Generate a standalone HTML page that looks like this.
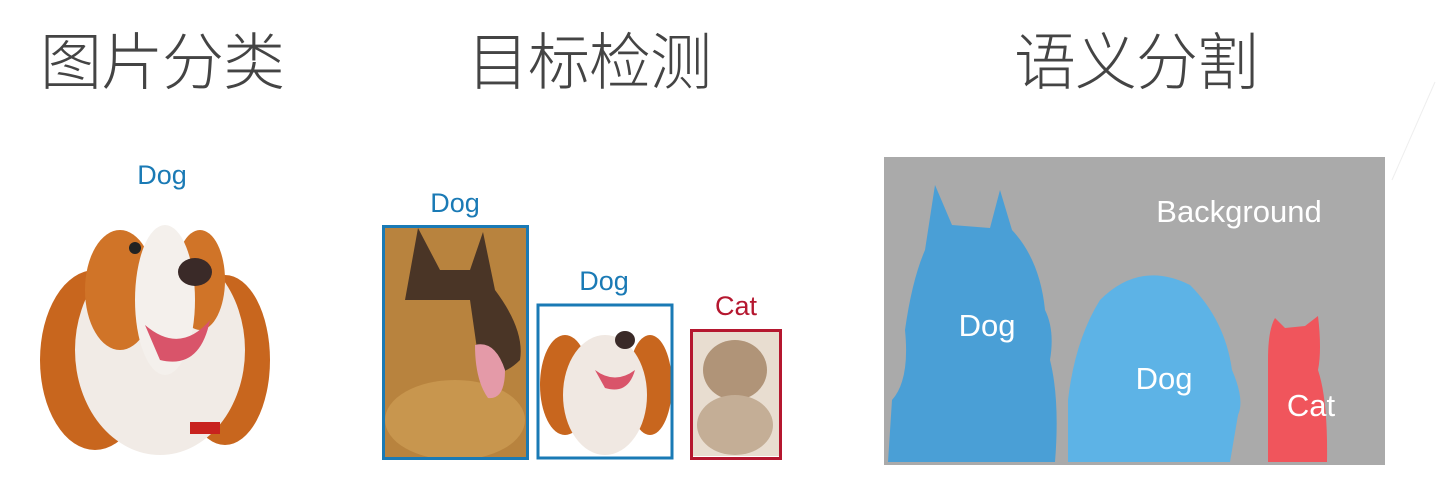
<!DOCTYPE html>
<html><head><meta charset="utf-8"><style>
body{margin:0;width:1442px;height:478px;background:#fff;overflow:hidden;position:relative}
.t{position:absolute;top:17px;font:300 62px "Noto Sans CJK SC",sans-serif;color:#444;letter-spacing:-1px;line-height:80px;white-space:nowrap}
svg{position:absolute;left:0;top:0}
</style></head><body>
<div class="t" style="left:40px">图片分类</div>
<div class="t" style="left:467px">目标检测</div>
<div class="t" style="left:1014px">语义分割</div>
<svg width="1442" height="478" font-family="Liberation Sans, sans-serif">
<g>
<ellipse cx="95" cy="360" rx="55" ry="90" fill="#c8661e"/>
<ellipse cx="225" cy="360" rx="45" ry="85" fill="#c8661e"/>
<ellipse cx="160" cy="350" rx="85" ry="105" fill="#f1ebe6"/>
<ellipse cx="120" cy="290" rx="35" ry="60" fill="#d07428"/>
<ellipse cx="200" cy="280" rx="25" ry="50" fill="#d07428"/>
<ellipse cx="165" cy="300" rx="30" ry="75" fill="#f4f0ec"/>
<ellipse cx="195" cy="272" rx="17" ry="14" fill="#3a2a28"/>
<ellipse cx="135" cy="248" rx="6" ry="6" fill="#222"/>
<path d="M145 325 Q180 355 210 320 Q200 370 160 360Z" fill="#d9546a"/>
<rect x="190" y="422" width="30" height="12" fill="#c8221e"/>
</g>
<text x="162" y="184" font-size="27" fill="#1a7ab5" text-anchor="middle">Dog</text>
<g>
<rect x="384" y="227" width="142" height="230" fill="#b8833e"/>
<path d="M405 300 L418 228 L440 270 L470 270 L483 232 L495 290 Q525 330 520 360 Q500 380 480 370 L470 300 Z" fill="#4a3526"/>
<ellipse cx="455" cy="420" rx="70" ry="40" fill="#c8964e"/>
<path d="M475 345 Q495 340 505 370 Q505 400 488 398 Q475 380 475 345Z" fill="#e49aa8"/>
<rect x="539" y="306" width="131" height="150" fill="#fff"/>
<ellipse cx="565" cy="385" rx="25" ry="50" fill="#c8661e"/>
<ellipse cx="650" cy="385" rx="22" ry="50" fill="#c8661e"/>
<ellipse cx="605" cy="395" rx="42" ry="60" fill="#f0e8e2"/>
<ellipse cx="625" cy="340" rx="10" ry="9" fill="#3a2a28"/>
<path d="M595 370 Q615 385 635 370 Q628 395 605 388Z" fill="#d9546a"/>
<rect x="692" y="332" width="87" height="124" fill="#e8ddd0"/>
<ellipse cx="735" cy="370" rx="32" ry="30" fill="#b09478"/>
<ellipse cx="735" cy="425" rx="38" ry="30" fill="#c4ae96"/>
</g>
<rect x="383.5" y="226.5" width="144" height="232" fill="none" stroke="#1a7ab5" stroke-width="3"/>
<rect x="538" y="305" width="134" height="153" fill="none" stroke="#1a7ab5" stroke-width="3"/>
<rect x="691.5" y="330.5" width="89" height="128" fill="none" stroke="#b5172f" stroke-width="3"/>
<text x="455" y="212" font-size="27" fill="#1a7ab5" text-anchor="middle">Dog</text>
<text x="604" y="290" font-size="27" fill="#1a7ab5" text-anchor="middle">Dog</text>
<text x="736" y="315" font-size="27" fill="#b5172f" text-anchor="middle">Cat</text>
<rect x="884" y="157" width="501" height="308" fill="#aaaaaa"/>
<path d="M888 462 L892 400 Q910 380 905 330 Q912 280 925 250 L935 185 L952 225 L990 228 L1000 190 L1012 230 Q1040 260 1045 310 Q1055 330 1050 360 Q1060 400 1055 462Z" fill="#4a9fd6"/>
<path d="M1068 462 L1068 400 Q1075 340 1100 300 Q1140 260 1190 285 Q1225 320 1232 370 Q1245 400 1238 415 L1230 462Z" fill="#5db3e6"/>
<path d="M1268 462 L1268 360 Q1268 330 1275 318 L1285 328 L1305 326 L1318 316 Q1322 350 1318 370 Q1328 400 1327 462Z" fill="#f0555c"/>
<text x="1239" y="222" font-size="31" fill="#fff" text-anchor="middle">Background</text>
<text x="987" y="336" font-size="31" fill="#fff" text-anchor="middle">Dog</text>
<text x="1164" y="389" font-size="31" fill="#fff" text-anchor="middle">Dog</text>
<text x="1311" y="416" font-size="31" fill="#fff" text-anchor="middle">Cat</text>
<path d="M1435 82 L1392 180" stroke="#eee" stroke-width="1"/>
</svg>
</body></html>
